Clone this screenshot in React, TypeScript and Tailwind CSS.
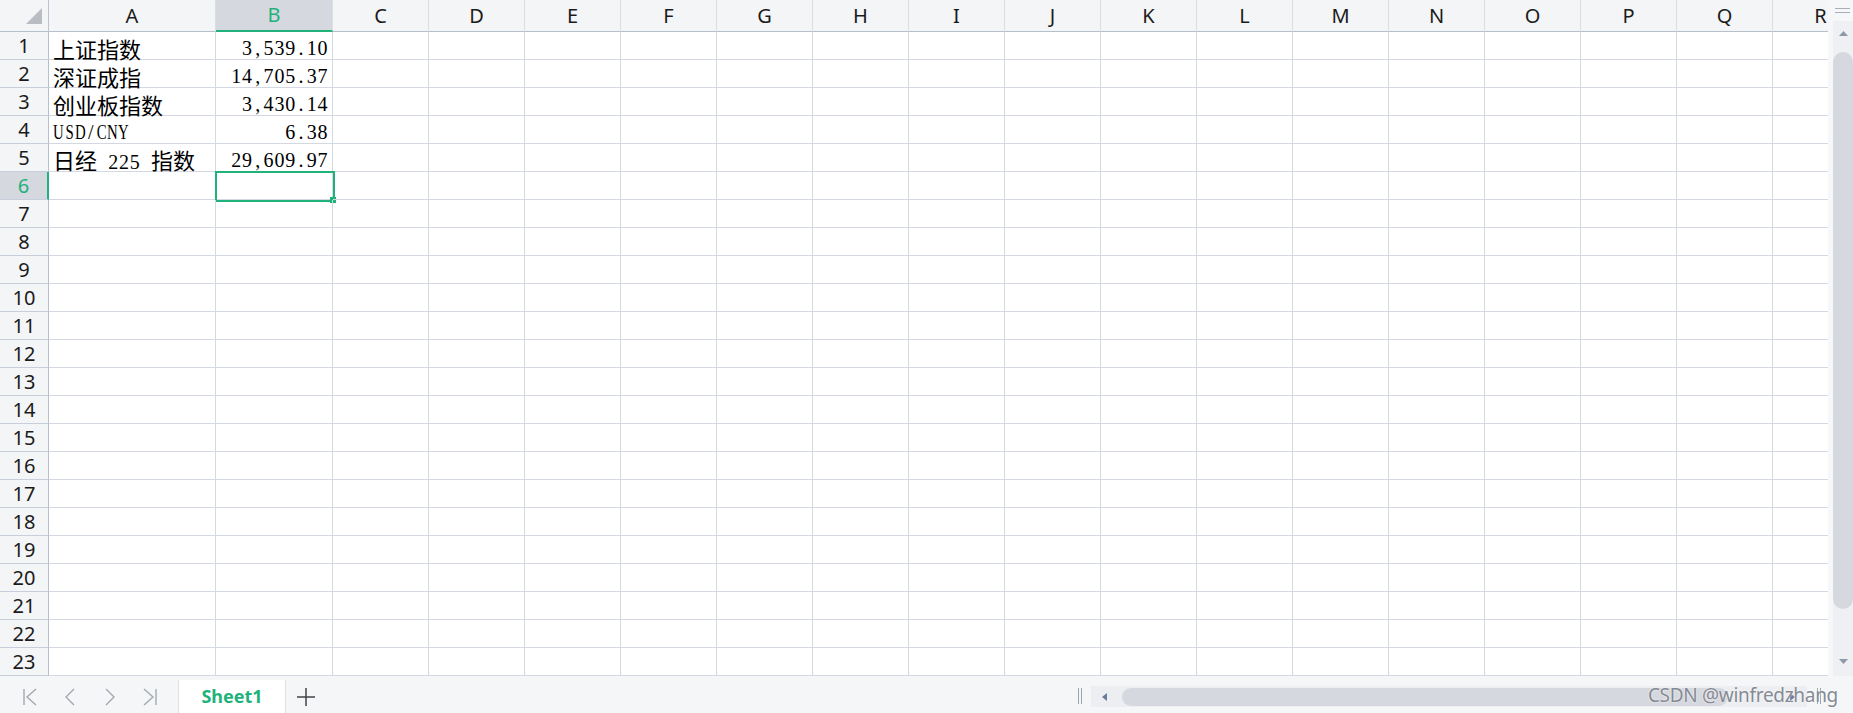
const COLS = ['A', 'B', 'C', 'D', 'E', 'F', 'G', 'H', 'I', 'J', 'K', 'L', 'M', 'N', 'O', 'P', 'Q', 'R']

const WIDTH: Record<string, string> = {
  A: 'w-[167px]',
  B: 'w-[117px]',
}

const GREEN = 'text-[#1fb27a]'

type Piece = { t: string; cjk?: boolean }

const DATA: Record<number, { a: Piece[]; b: string }> = {
  1: { a: [{ t: '上证指数', cjk: true }], b: '3,539.10' },
  2: { a: [{ t: '深证成指', cjk: true }], b: '14,705.37' },
  3: { a: [{ t: '创业板指数', cjk: true }], b: '3,430.14' },
  4: { a: [{ t: 'USD/CNY' }], b: '6.38' },
  5: {
    a: [{ t: '日经', cjk: true }, { t: ' 225 ' }, { t: '指数', cjk: true }],
    b: '29,609.97',
  },
}

// half-width latin, laid out on a fixed pitch like the sheet's song-style font
function Mono({ text }: { text: string }) {
  return (
    <>
      {text.split('').map((ch, i) => (
        <span key={i} className="inline-flex w-[10.8px] justify-center">
          <span className={/[A-Z]/.test(ch) ? 'inline-block scale-x-[0.74]' : ''}>
            {ch === ' ' ? '\u00a0' : ch}
          </span>
        </span>
      ))}
    </>
  )
}

function CellText({ pieces }: { pieces: Piece[] }) {
  return (
    <span className="whitespace-nowrap leading-none">
      {pieces.map((p, i) =>
        p.cjk ? (
          <span key={i} className="font-['Noto_Sans_CJK_SC',sans-serif] text-[22px] leading-none">
            {p.t}
          </span>
        ) : (
          <span key={i} className="font-['Liberation_Serif',serif] text-[20px] leading-none">
            <Mono text={p.t} />
          </span>
        )
      )}
    </span>
  )
}

function HeaderRow() {
  return (
    <div className="flex h-[32px] shrink-0">
      <div className="w-[49px] shrink-0 bg-[#f4f5f7] border-r border-b border-r-[#bcc3cf] border-b-[#b8bfcc] relative">
        <svg className="absolute left-[26px] top-[8px]" width="16" height="16" viewBox="0 0 16 16">
          <polygon points="16,0 16,16 0,16" fill="#b9bcc2" />
        </svg>
      </div>
      {COLS.map((c) => {
        const sel = c === 'B'
        return (
          <div
            key={c}
            className={`${WIDTH[c] ?? 'w-[96px]'} shrink-0 flex items-center justify-center text-[20px] font-['Noto_Sans',sans-serif] border-r border-r-[#dadde3] ${
              sel
                ? `bg-[#d5d8de] border-b-2 border-b-[#1fb27a] ${GREEN}`
                : 'bg-[#f4f5f7] border-b border-b-[#b8bfcc] text-[#1b1b1b]'
            }`}
          >
            {c}
          </div>
        )
      })}
    </div>
  )
}

function Row({ n }: { n: number }) {
  const sel = n === 6
  const d = DATA[n]
  return (
    <div className="flex h-[28px] shrink-0">
      <div
        className={`w-[49px] shrink-0 flex items-center justify-center text-[20px] font-['Noto_Sans',sans-serif] border-b border-b-[#c9cfda] ${
          sel
            ? `bg-[#d5d8de] border-r-2 border-r-[#1fb27a] ${GREEN}`
            : 'bg-[#f4f5f7] border-r border-r-[#b8bfcc] text-[#1b1b1b]'
        }`}
      >
        {n}
      </div>
      {COLS.map((c) => (
        <div
          key={c}
          className={`${WIDTH[c] ?? 'w-[96px]'} shrink-0 relative flex items-center pt-[5px] border-r border-b border-[#d3d8e2] text-black ${
            c === 'B' ? 'justify-end pr-[4px]' : 'pl-[4px]'
          }`}
        >
          {d && c === 'A' && <CellText pieces={d.a} />}
          {d && c === 'B' && <CellText pieces={[{ t: d.b }]} />}
          {sel && c === 'B' && (
            <div className="absolute left-[-1px] top-[-1px] w-[120px] h-[31px] border-2 border-[#1fb27a]">
              <div className="absolute right-[-3px] bottom-[-3px] w-[6px] h-[6px] bg-[#1fb27a]" />
            </div>
          )}
        </div>
      ))}
    </div>
  )
}

function VScroll() {
  return (
    <div className="w-[25px] shrink-0 bg-[#f6f7f9] flex flex-col">
      <div className="h-[21px] flex flex-col items-center justify-center gap-[3px] pl-[4px]">
        <div className="w-[15px] h-px bg-[#a9afb9]" />
        <div className="w-[15px] h-px bg-[#a9afb9]" />
      </div>
      <div className="flex-1 ml-[5px] bg-[#eef0f3] flex flex-col items-center">
        <svg className="mt-[10px]" width="9" height="5" viewBox="0 0 9 5">
          <polygon points="4.5,0 9,5 0,5" fill="#8e98aa" />
        </svg>
        <div className="mt-[16px] w-[20px] h-[557px] rounded-full bg-[#d5d8df]" />
        <div className="flex-1" />
        <svg className="mb-[12px]" width="9" height="5" viewBox="0 0 9 5">
          <polygon points="0,0 9,0 4.5,5" fill="#8e98aa" />
        </svg>
      </div>
    </div>
  )
}

function NavIcon({ kind }: { kind: 'first' | 'prev' | 'next' | 'last' }) {
  const stroke = '#a4a9b1'
  return (
    <svg width="16" height="18" viewBox="0 0 16 18" fill="none" stroke={stroke} strokeWidth="1.4">
      {kind === 'first' && (
        <>
          <line x1="2" y1="1" x2="2" y2="17" />
          <polyline points="14,1 5,9 14,17" />
        </>
      )}
      {kind === 'prev' && <polyline points="12,1 4,9 12,17" />}
      {kind === 'next' && <polyline points="4,1 12,9 4,17" />}
      {kind === 'last' && (
        <>
          <polyline points="2,1 11,9 2,17" />
          <line x1="14" y1="1" x2="14" y2="17" />
        </>
      )}
    </svg>
  )
}

function BottomBar() {
  return (
    <div className="h-[37px] shrink-0 bg-[#f5f6f8] flex relative">
      <div className="w-[178px] shrink-0 flex items-center pl-[22px] gap-[24px] pt-[4px]">
        <NavIcon kind="first" />
        <NavIcon kind="prev" />
        <NavIcon kind="next" />
        <NavIcon kind="last" />
      </div>
      <div className="w-[108px] shrink-0 mt-[4px] bg-white border-x border-[#dfe2e7] flex items-center justify-center font-['Noto_Sans',sans-serif] font-bold text-[18px] text-[#1fb27a]">
        Sheet1
      </div>
      <div className="w-[40px] shrink-0 flex items-center justify-center pt-[4px]">
        <svg width="18" height="18" viewBox="0 0 18 18" stroke="#3f4349" strokeWidth="1.5">
          <line x1="9" y1="0" x2="9" y2="18" />
          <line x1="0" y1="9" x2="18" y2="9" />
        </svg>
      </div>
      <div className="flex-1" />
      <div className="w-[13px] shrink-0 flex items-center gap-[2px] pt-[3px]">
        <div className="w-px h-[16px] bg-[#9ca4b2]" />
        <div className="w-px h-[16px] bg-[#9ca4b2]" />
      </div>
      <div className="w-[716px] shrink-0 mt-[10px] h-[21px] bg-[#eceef2] flex items-center pl-[11px] pr-[12px]">
        <svg width="5" height="8" viewBox="0 0 5 8">
          <polygon points="5,0 5,8 0,4" fill="#6b7b9a" />
        </svg>
        <div className="ml-[15px] w-[606px] h-[18px] rounded-full bg-[#d5d8df]" />
        <div className="flex-1" />
        <svg width="5" height="8" viewBox="0 0 5 8">
          <polygon points="0,0 0,8 5,4" fill="#6b7b9a" />
        </svg>
      </div>
      <div className="w-[46px] shrink-0 flex items-center gap-[2px] pl-[10px] pt-[3px]">
        <div className="w-px h-[16px] bg-[#9ca4b2]" />
        <div className="w-px h-[16px] bg-[#9ca4b2]" />
      </div>
      <div className="absolute right-[15px] top-[5px] font-['Noto_Sans',sans-serif] text-[19px] tracking-[-0.3px] text-[#858a93] [text-shadow:0_0_2px_#ffffff]">
        CSDN @winfredzhang
      </div>
    </div>
  )
}

export default function App() {
  const rows = Array.from({ length: 23 }, (_, i) => i + 1)
  return (
    <div className="w-[1853px] h-[713px] flex flex-col bg-white overflow-hidden">
      <div className="flex h-[676px] shrink-0">
        <div className="w-[1828px] shrink-0 overflow-hidden flex flex-col">
          <HeaderRow />
          {rows.map((n) => (
            <Row key={n} n={n} />
          ))}
        </div>
        <VScroll />
      </div>
      <BottomBar />
    </div>
  )
}
